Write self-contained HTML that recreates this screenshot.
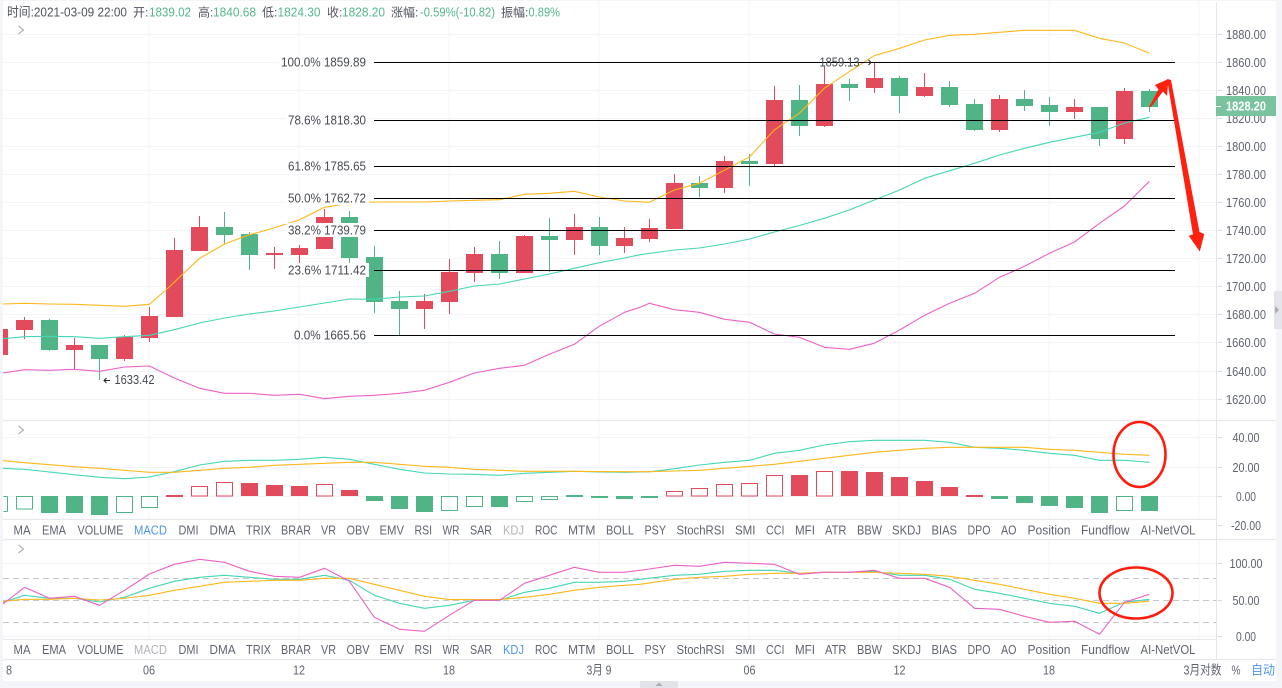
<!DOCTYPE html>
<html><head><meta charset="utf-8"><style>
html,body{margin:0;padding:0;background:#f3f5f9;width:1282px;height:688px;overflow:hidden}
svg{display:block}
text{font-family:"Liberation Sans","Noto Sans CJK SC",sans-serif;font-size:13px;fill:#50535f}
text.c{font-size:12px}
.g{fill:#55b78b}.t{fill:#5f6470}.m{fill:#5f6470}.k{fill:#474a52}
polyline{fill:none;stroke-width:1.1;stroke-linejoin:round}
</style></head><body>
<svg width="1282" height="688" viewBox="0 0 1282 688" xmlns="http://www.w3.org/2000/svg">
<rect x="0" y="0" width="1282" height="688" fill="#f3f5f9"/>
<rect x="3" y="1" width="1273" height="680" fill="#fff"/>
<!-- grid -->
<path d="M3 34.5H1217M3 62.5H1217M3 90.5H1217M3 118.5H1217M3 146.5H1217M3 174.5H1217M3 202.5H1217M3 230.5H1217M3 258.5H1217M3 286.5H1217M3 314.5H1217M3 342.5H1217M3 371.5H1217M3 399.5H1217M3 437.5H1217M3 467.5H1217M3 496.5H1217M3 563.5H1217M3 636.5H1217M149 1V660M299 1V660M449 1V660M599 1V660M749 1V660M899 1V660M1049 1V660M1199 1V660" stroke="#f1f4f8" stroke-width="1" fill="none"/>
<path d="M3 578.5H1217M3 600.5H1217M3 622.5H1217" stroke="#c6c6c6" stroke-width="1" stroke-dasharray="6 4" fill="none"/>
<!-- panels -->
<path d="M3 420.5H1276M3 519.5H1217M3 539.5H1276M3 639.5H1217M3 659.5H1276" stroke="#e6e8ec" stroke-width="1.2" fill="none"/>
<rect x="3" y="520" width="1213" height="19" fill="#fff"/>
<rect x="3" y="640" width="1213" height="19" fill="#fff"/>
<path d="M1216.5 2V660" stroke="#e3e6eb" stroke-width="1" fill="none"/>
<path d="M1217 34.5h5M1217 62.5h5M1217 90.5h5M1217 118.5h5M1217 146.5h5M1217 174.5h5M1217 202.5h5M1217 230.5h5M1217 258.5h5M1217 286.5h5M1217 314.5h5M1217 342.5h5M1217 371.5h5M1217 399.5h5M1217 437.5h5M1217 467.5h5M1217 496.5h5M1217 525.5h5M1217 563.5h5M1217 600.5h5M1217 636.5h5" stroke="#d8dce3" stroke-width="1" fill="none"/>
<!-- red candle wicks and bodies -->
<path d="M24.5 317V339M74.5 338V369M124.5 335V361M149.5 307V342M174.5 238V317M199.5 216V251M274.5 247V269M299.5 245V263M324.5 209V249M424.5 294V329M449.5 259V314M474.5 247V282M524.5 235V273M574.5 214V255M624.5 227V253M649.5 219V242M674.5 174V229M724.5 156V193M774.5 86V166M824.5 66V127M874.5 62V93M924.5 73V97M999.5 95V132M1074.5 99V119M1124.5 88V144" stroke="#e24b5b" stroke-width="1" fill="none"/>
<path d="M3 329h5v26h-5zM16 320h17v10h-17zM66 345h17v5h-17zM116 337h17v22h-17zM141 316h17v22h-17zM166 250h17v67h-17zM191 227h17v24h-17zM266 253h17v2h-17zM291 248h17v7h-17zM316 217h17v32h-17zM416 301h17v8h-17zM441 272h17v30h-17zM466 254h17v19h-17zM516 236h17v37h-17zM566 227h17v13h-17zM616 238h17v8h-17zM641 228h17v11h-17zM666 183h17v46h-17zM716 161h17v27h-17zM766 100h17v64h-17zM816 84h17v42h-17zM866 78h17v10h-17zM916 87h17v9h-17zM991 99h17v31h-17zM1066 107h17v5h-17zM1116 91h17v48h-17z" fill="#e24b5b"/>
<!-- green candles -->
<path d="M49.5 319V351M99.5 345V380M224.5 212V244M249.5 232V270M349.5 211V263M374.5 246V313M399.5 291V335M499.5 241V279M549.5 218V272M599.5 217V255M699.5 176V197M749.5 154V186M799.5 85V136M849.5 79V101M899.5 76V113M949.5 81V107M974.5 99V131M1024.5 90V111M1049.5 97V126M1099.5 107V146M1149.5 89V112" stroke="#50b487" stroke-width="1" fill="none"/>
<path d="M41 320h17v30h-17zM91 345h17v14h-17zM216 227h17v8h-17zM241 234h17v21h-17zM341 217h17v41h-17zM366 257h17v45h-17zM391 301h17v8h-17zM491 254h17v19h-17zM541 236h17v4h-17zM591 227h17v19h-17zM691 183h17v5h-17zM741 161h17v3h-17zM791 100h17v26h-17zM841 84h17v4h-17zM891 78h17v18h-17zM941 87h17v18h-17zM966 104h17v26h-17zM1016 99h17v7h-17zM1041 105h17v7h-17zM1091 107h17v32h-17zM1141 91h17v16h-17z" fill="#50b487"/>
<!-- MACD histogram -->
<path d="M66 496h17v17h-17zM91 496h17v19h-17zM41 496h17v17h-17zM366 496h17v5h-17zM391 496h17v13h-17zM416 496h17v16h-17zM491 496h17v11h-17zM566 495h17v2h-17zM591 496h17v2h-17zM616 496h17v3h-17zM641 496h17v2h-17zM1016 496h17v7h-17zM991 496h17v3h-17zM1041 496h17v10h-17zM1066 496h17v12h-17zM1091 496h17v17h-17zM1141 496h17v15h-17z" fill="#50b487"/>
<path d="M3.5 496.5H7.5M3.5 511.5H7.5M7.5 496.5V511.5M16.5 496.5h16v12.5h-16zM116.5 496.5h16v16h-16zM141.5 496.5h16v11h-16zM441.5 496.5h16v14h-16zM466.5 496.5h16v10h-16zM516.5 496.5h16v5h-16zM541.5 496.5h16v3h-16zM1116.5 496.5h16v14h-16z" fill="none" stroke="#50b487" stroke-width="1"/>
<path d="M166 495h17v2h-17zM241 483h17v13h-17zM266 485h17v11h-17zM291 486h17v10h-17zM341 490h17v6h-17zM791 475h17v21h-17zM841 471h17v25h-17zM866 472h17v24h-17zM891 477h17v19h-17zM916 481h17v15h-17zM941 487h17v9h-17zM966 495h17v2h-17z" fill="#e24b5b"/>
<path d="M191.5 486.5h16v9.5h-16zM216.5 482.5h16v13.5h-16zM316.5 484.5h16v11.5h-16zM666.5 491.5h16v4.5h-16zM691.5 488.5h16v7.5h-16zM716.5 484.5h16v11.5h-16zM741.5 483.5h16v12.5h-16zM766.5 475.5h16v20.5h-16zM816.5 471.5h16v24.5h-16z" fill="none" stroke="#e24b5b" stroke-width="1"/>
<!-- main lines -->
<polyline stroke="#ffb71b" points="3,304 24.5,303.3 49.5,304 74.3,304.3 99.6,305.3 124.5,306.3 149.4,304.3 166,290 199.6,258.3 224.5,244 249.4,234.7 267,230 299,220 324.5,207.3 349.4,203.3 374.3,202 399.6,202 424.5,202 449.4,201 474.3,200.3 499.6,199.7 524.5,194.3 549.4,193.3 574.3,191.3 599.2,197 624.5,201 649.4,202.3 674.4,190 699.4,183.3 724.8,170 749.7,156.7 774.3,130 799.3,113.3 824.3,88.3 849.3,71.7 874.2,55.7 899.6,48.3 924.6,40 949.6,35.3 974.6,34.3 999.5,32.3 1024.5,30.3 1049.5,30.3 1074.5,30.3 1099.5,38.3 1124.5,43 1149.4,53.3"/>
<polyline stroke="#45d6b5" points="3,338.7 24.5,336.7 49.5,336.3 74.3,336.7 99.6,338.3 124.5,336.7 149.4,335.3 174.3,329.7 199.6,323 224.5,318 249.4,314 274.3,311 299.6,307 324.5,303 349.4,299 374.3,299.3 399.6,297 424.5,296 449.4,291.3 474.3,286 499.6,284 524.5,279 549.4,274 574.3,268.3 599.2,262.7 624.5,258 640,254.7 674.4,250 699.4,248 724.8,244 749.7,239 774.3,232 799.3,225.5 824.3,218.3 849.3,210 874.2,200 899.6,190 924.6,178.3 949.6,170.7 974.6,163.3 999.5,155 1024.5,148.3 1049.5,142.3 1074.5,137.3 1099.5,132.3 1124.5,123 1149.4,117.3"/>
<polyline stroke="#ec62c6" points="3,373 24.5,369.7 49.5,370.3 74.3,369.3 99.6,371.3 124.5,367 149.4,366 174.3,378 199.6,388.3 224.5,393.3 249.4,393.3 274.3,395.3 299.6,394.3 324.5,398.7 349.4,396.3 374.3,395.3 399.6,393.3 424.5,390.3 449.4,382.3 474.3,373 499.6,368.3 524.5,365.3 549.4,354.3 574.3,344.3 599.2,326.3 624.5,312.3 640,307.3 649.4,303.3 674.4,309.7 699.4,312.3 724.8,319.3 749.7,322.3 774.3,334 799.3,337.3 824.3,347.3 849.3,349.3 874.2,343.3 899.6,330 924.6,315.3 949.6,303.3 974.6,293.3 999.5,277.3 1024.5,266.3 1049.5,253.3 1074.5,242 1099.5,223.3 1124.5,206 1149.4,181.3"/>
<!-- MACD lines -->
<polyline stroke="#45d6b5" points="3,468.3 24.5,469.3 49.5,472 74.3,474.7 99.6,477.3 124.5,478.7 149.4,477 174.3,471.7 199.6,465 224.5,461.3 249.4,460.3 274.3,460.3 299.6,459.3 324.5,457.3 349.4,459.3 374.3,464.3 399.6,469.3 424.5,473 449.4,474 474.3,474.3 499.6,475.3 524.5,473.3 549.4,472.3 574.3,471.3 599.2,472 624.5,472.3 649.4,471.8 674.4,468.7 699.4,465 724.8,462.3 749.7,460.3 774.3,453.3 799.3,450.3 824.3,445 849.3,441.7 874.2,440.3 899.6,440.3 924.6,440.3 949.6,442.3 974.6,447.3 999.5,448.3 1024.5,450.3 1049.5,453.3 1074.5,455.3 1099.5,460.3 1124.5,460.3 1149.4,462.3"/>
<polyline stroke="#ffb71b" points="3,460.7 24.5,462.7 49.5,464.7 74.3,466.7 99.6,468.3 124.5,470.3 149.4,472.3 174.3,472.3 199.6,470.3 224.5,468.3 249.4,467.3 274.3,465.3 299.6,464.3 324.5,463.3 349.4,462.3 374.3,462.3 399.6,464.3 424.5,466.3 449.4,467.3 474.3,469.3 499.6,470.3 524.5,471.3 549.4,471.3 574.3,471.3 599.2,471.6 624.5,471.7 649.4,471.7 674.4,471 699.4,470.3 724.8,468.3 749.7,466.3 774.3,464.3 799.3,461.3 824.3,458.3 849.3,455.3 874.2,452.3 899.6,450.3 924.6,448.3 949.6,447.3 974.6,447.3 999.5,447.3 1024.5,447.3 1049.5,449.3 1074.5,450.3 1099.5,452.3 1124.5,454.3 1149.4,455.3"/>
<!-- KDJ lines -->
<polyline stroke="#45d6b5" points="3,602.3 24.5,595.3 49.5,598.3 74.3,598.3 99.6,602 124.5,597.3 149.4,588.3 174.3,581.3 199.6,577.3 224.5,575.3 249.4,577.3 274.3,579.3 299.6,579.3 324.5,575.3 349.4,580.3 374.3,595.3 399.6,603.3 424.5,608.3 449.4,605.3 474.3,600.3 499.6,600.3 524.5,592.3 549.4,588.3 574.3,582.3 599.2,582.3 624.5,581.3 640,579.3 674.4,575.3 699.4,574.3 724.8,571.3 749.7,570.3 774.3,570.3 799.3,573.3 824.3,572.3 849.3,572.3 874.2,571.3 899.6,575.3 924.6,575.3 949.6,579.3 974.6,589.3 999.5,593.3 1024.5,598.3 1049.5,603.3 1074.5,606.3 1099.5,613.3 1124.5,602.3 1149.4,599.3"/>
<polyline stroke="#ffb71b" points="3,601.3 24.5,599.3 49.5,599.3 74.3,598.3 99.6,600 124.5,598.3 149.4,595.3 174.3,590.3 199.6,586.3 224.5,582.3 249.4,581.3 274.3,580.3 299.6,580.3 324.5,578.3 349.4,578.3 374.3,584.3 399.6,590.3 424.5,596.3 449.4,599.6 474.3,599.6 499.6,599.6 524.5,597.3 549.4,594.3 574.3,590.3 599.2,587.3 624.5,585.3 640,584.3 674.4,579.3 699.4,577.3 724.8,576.3 749.7,574.3 774.3,573.3 799.3,573.3 824.3,572.3 849.3,572.3 874.2,572.3 899.6,573.3 924.6,574.3 949.6,576.3 974.6,580.3 999.5,584.3 1024.5,589.3 1049.5,594.3 1074.5,598.3 1099.5,603.3 1124.5,603.3 1149.4,601.3"/>
<polyline stroke="#ec62c6" points="3,604 24.5,587.3 49.5,598.3 74.3,596.3 99.6,605.3 124.5,590.3 149.4,574 174.3,564.3 199.6,559.3 224.5,562.3 249.4,571.3 274.3,576.3 299.6,577.3 324.5,568.3 349.4,581.3 374.3,617.3 399.6,629.3 424.5,631.3 449.4,615.3 474.3,600.3 499.6,600.3 524.5,583.3 549.4,575.3 574.3,567.3 599.2,572.3 624.5,572.3 640,570.3 649.4,569 674.4,565.3 699.4,566.3 724.8,562.3 749.7,563.3 774.3,564.3 799.3,574.3 824.3,572.3 849.3,572.3 874.2,570.3 899.6,578.3 924.6,578.3 949.6,587.3 974.6,608.3 999.5,609.3 1024.5,616.3 1049.5,622.3 1074.5,621.3 1099.5,634.3 1124.5,602.3 1149.4,594.3"/>
<!-- fib label backgrounds -->
<g fill="#fff">
<rect x="279" y="55" width="90" height="14"/><rect x="286" y="113" width="83" height="14"/><rect x="286" y="159" width="83" height="14"/><rect x="286" y="191" width="83" height="14"/><rect x="286" y="223" width="83" height="14"/><rect x="286" y="263" width="83" height="14"/><rect x="292" y="328" width="77" height="14"/>
</g>
<!-- fib lines -->
<path d="M374 62.5H1175M374 120.5H1175M374 166.5H1175M374 198.5H1175M374 230.5H1175M374 270.5H1175M374 335.5H1175" stroke="#000" stroke-width="1" fill="none"/>
<g class="k">
<text class="k" x="281" y="66.5" textLength="85" lengthAdjust="spacingAndGlyphs">100.0% 1859.89</text>
<text class="k" x="288" y="124.5" textLength="78" lengthAdjust="spacingAndGlyphs">78.6% 1818.30</text>
<text class="k" x="288" y="170.5" textLength="78" lengthAdjust="spacingAndGlyphs">61.8% 1785.65</text>
<text class="k" x="288" y="202.5" textLength="78" lengthAdjust="spacingAndGlyphs">50.0% 1762.72</text>
<text class="k" x="288" y="234.5" textLength="78" lengthAdjust="spacingAndGlyphs">38.2% 1739.79</text>
<text class="k" x="288" y="274.5" textLength="78" lengthAdjust="spacingAndGlyphs">23.6% 1711.42</text>
<text class="k" x="294" y="339.5" textLength="72" lengthAdjust="spacingAndGlyphs">0.0% 1665.56</text>
</g>
<text class="k" x="819.5" y="66.5" textLength="40" lengthAdjust="spacingAndGlyphs">1859.13</text>
<path d="M865 62.5h6M868.5 60l2.5 2.5l-2.5 2.5" stroke="#222" stroke-width="1" fill="none"/>
<text class="k" x="114.5" y="384" textLength="40" lengthAdjust="spacingAndGlyphs">1633.42</text>
<path d="M104 380.5h6M106.5 378l-2.5 2.5l2.5 2.5" stroke="#222" stroke-width="1" fill="none"/>
<!-- red annotations -->
<polygon points="1167,79 1171,80 1199.5,232 1204.3,234 1199.8,251.5 1188.7,235.7 1193,234.5" fill="#ff2010"/>
<polygon points="1149,107 1158.5,89.5 1155,85 1168.5,79 1167,96 1163,91.5 1151,107" fill="#ff2010"/>
<ellipse cx="1139.5" cy="454.5" rx="26" ry="32.5" fill="none" stroke="#ff1c0c" stroke-width="2.6"/>
<ellipse cx="1136" cy="593" rx="36.5" ry="25.5" fill="none" stroke="#ff1c0c" stroke-width="2.6"/>
<!-- header -->
<text x="7" y="16.5" textLength="120" lengthAdjust="spacingAndGlyphs">时间:2021-03-09 22:00</text>
<text class="c" x="133" y="16.5">开:</text><text class="g" x="149" y="16.5" textLength="42" lengthAdjust="spacingAndGlyphs">1839.02</text>
<text class="c" x="198" y="16.5">高:</text><text class="g" x="213" y="16.5" textLength="43" lengthAdjust="spacingAndGlyphs">1840.68</text>
<text class="c" x="262" y="16.5">低:</text><text class="g" x="277.5" y="16.5" textLength="43" lengthAdjust="spacingAndGlyphs">1824.30</text>
<text class="c" x="327" y="16.5">收:</text><text class="g" x="342" y="16.5" textLength="43" lengthAdjust="spacingAndGlyphs">1828.20</text>
<text class="c" x="391" y="16.5">涨幅:</text><text class="g" x="420" y="16.5" textLength="75" lengthAdjust="spacingAndGlyphs">-0.59%(-10.82)</text>
<text class="c" x="501" y="16.5">振幅:</text><text class="g" x="528.5" y="16.5" textLength="31.5" lengthAdjust="spacingAndGlyphs">0.89%</text>
<!-- chevrons -->
<path d="M18.5 26l5 4l-5 4M18.5 426l5 4l-5 4M18.5 545l5 4l-5 4" fill="none" stroke="#a0a3ab" stroke-width="1"/>
<!-- price axis -->
<g class="t">
<text class="t" x="1226" y="39" textLength="40" lengthAdjust="spacingAndGlyphs">1880.00</text>
<text class="t" x="1226" y="67" textLength="40" lengthAdjust="spacingAndGlyphs">1860.00</text>
<text class="t" x="1226" y="95" textLength="40" lengthAdjust="spacingAndGlyphs">1840.00</text>
<text class="t" x="1226" y="123" textLength="40" lengthAdjust="spacingAndGlyphs">1820.00</text>
<text class="t" x="1226" y="151" textLength="40" lengthAdjust="spacingAndGlyphs">1800.00</text>
<text class="t" x="1226" y="179" textLength="40" lengthAdjust="spacingAndGlyphs">1780.00</text>
<text class="t" x="1226" y="207" textLength="40" lengthAdjust="spacingAndGlyphs">1760.00</text>
<text class="t" x="1226" y="235" textLength="40" lengthAdjust="spacingAndGlyphs">1740.00</text>
<text class="t" x="1226" y="263" textLength="40" lengthAdjust="spacingAndGlyphs">1720.00</text>
<text class="t" x="1226" y="291" textLength="40" lengthAdjust="spacingAndGlyphs">1700.00</text>
<text class="t" x="1226" y="319" textLength="40" lengthAdjust="spacingAndGlyphs">1680.00</text>
<text class="t" x="1226" y="347" textLength="40" lengthAdjust="spacingAndGlyphs">1660.00</text>
<text class="t" x="1226" y="376" textLength="40" lengthAdjust="spacingAndGlyphs">1640.00</text>
<text class="t" x="1226" y="404" textLength="40" lengthAdjust="spacingAndGlyphs">1620.00</text>
<text class="t" x="1232.5" y="442" textLength="27" lengthAdjust="spacingAndGlyphs">40.00</text>
<text class="t" x="1232.5" y="472" textLength="27" lengthAdjust="spacingAndGlyphs">20.00</text>
<text class="t" x="1236" y="501" textLength="20" lengthAdjust="spacingAndGlyphs">0.00</text>
<text class="t" x="1231" y="530" textLength="30" lengthAdjust="spacingAndGlyphs">-20.00</text>
<text class="t" x="1229.5" y="568" textLength="33" lengthAdjust="spacingAndGlyphs">100.00</text>
<text class="t" x="1232.5" y="605" textLength="27" lengthAdjust="spacingAndGlyphs">50.00</text>
<text class="t" x="1236" y="641" textLength="20" lengthAdjust="spacingAndGlyphs">0.00</text>
</g>
<rect x="1216" y="96" width="60" height="20" fill="#7ac39f"/>
<path d="M1216 106.5h5" stroke="#fff" stroke-width="1"/>
<text x="1226" y="110.5" textLength="40" lengthAdjust="spacingAndGlyphs" style="fill:#fff;font-weight:bold">1828.20</text>
<!-- menu 1 -->
<g class="m">
<text class="m" x="13.5" y="534.5" textLength="17" lengthAdjust="spacingAndGlyphs">MA</text>
<text class="m" x="42" y="534.5" textLength="24" lengthAdjust="spacingAndGlyphs">EMA</text>
<text class="m" x="77.5" y="534.5" textLength="46" lengthAdjust="spacingAndGlyphs">VOLUME</text>
<text style="fill:#4f95ee" x="134" y="534.5" textLength="33" lengthAdjust="spacingAndGlyphs">MACD</text>
<text class="m" x="178.5" y="534.5" textLength="20" lengthAdjust="spacingAndGlyphs">DMI</text>
<text class="m" x="209.5" y="534.5" textLength="26" lengthAdjust="spacingAndGlyphs">DMA</text>
<text class="m" x="246" y="534.5" textLength="25" lengthAdjust="spacingAndGlyphs">TRIX</text>
<text class="m" x="281" y="534.5" textLength="30" lengthAdjust="spacingAndGlyphs">BRAR</text>
<text class="m" x="321" y="534.5" textLength="15" lengthAdjust="spacingAndGlyphs">VR</text>
<text class="m" x="346.5" y="534.5" textLength="23" lengthAdjust="spacingAndGlyphs">OBV</text>
<text class="m" x="379.5" y="534.5" textLength="24.5" lengthAdjust="spacingAndGlyphs">EMV</text>
<text class="m" x="414.5" y="534.5" textLength="17.5" lengthAdjust="spacingAndGlyphs">RSI</text>
<text class="m" x="442.5" y="534.5" textLength="17" lengthAdjust="spacingAndGlyphs">WR</text>
<text class="m" x="470" y="534.5" textLength="22" lengthAdjust="spacingAndGlyphs">SAR</text>
<text style="fill:#b0b2b8" x="503" y="534.5" textLength="21" lengthAdjust="spacingAndGlyphs">KDJ</text>
<text class="m" x="535" y="534.5" textLength="22.5" lengthAdjust="spacingAndGlyphs">ROC</text>
<text class="m" x="568" y="534.5" textLength="27.5" lengthAdjust="spacingAndGlyphs">MTM</text>
<text class="m" x="606" y="534.5" textLength="28" lengthAdjust="spacingAndGlyphs">BOLL</text>
<text class="m" x="644.5" y="534.5" textLength="21.5" lengthAdjust="spacingAndGlyphs">PSY</text>
<text class="m" x="676.5" y="534.5" textLength="48" lengthAdjust="spacingAndGlyphs">StochRSI</text>
<text class="m" x="735" y="534.5" textLength="20.5" lengthAdjust="spacingAndGlyphs">SMI</text>
<text class="m" x="766" y="534.5" textLength="18.5" lengthAdjust="spacingAndGlyphs">CCI</text>
<text class="m" x="795" y="534.5" textLength="20" lengthAdjust="spacingAndGlyphs">MFI</text>
<text class="m" x="825" y="534.5" textLength="21.5" lengthAdjust="spacingAndGlyphs">ATR</text>
<text class="m" x="857" y="534.5" textLength="25" lengthAdjust="spacingAndGlyphs">BBW</text>
<text class="m" x="892" y="534.5" textLength="29" lengthAdjust="spacingAndGlyphs">SKDJ</text>
<text class="m" x="931.5" y="534.5" textLength="25.5" lengthAdjust="spacingAndGlyphs">BIAS</text>
<text class="m" x="967.5" y="534.5" textLength="23" lengthAdjust="spacingAndGlyphs">DPO</text>
<text class="m" x="1001" y="534.5" textLength="15.5" lengthAdjust="spacingAndGlyphs">AO</text>
<text class="m" x="1027.5" y="534.5" textLength="43" lengthAdjust="spacingAndGlyphs">Position</text>
<text class="m" x="1081" y="534.5" textLength="48.5" lengthAdjust="spacingAndGlyphs">Fundflow</text>
<text class="m" x="1140.5" y="534.5" textLength="55" lengthAdjust="spacingAndGlyphs">AI-NetVOL</text>
</g>
<!-- menu 2 -->
<g class="m">
<text class="m" x="13.5" y="654" textLength="17" lengthAdjust="spacingAndGlyphs">MA</text>
<text class="m" x="42" y="654" textLength="24" lengthAdjust="spacingAndGlyphs">EMA</text>
<text class="m" x="77.5" y="654" textLength="46" lengthAdjust="spacingAndGlyphs">VOLUME</text>
<text style="fill:#b0b2b8" x="134" y="654" textLength="33" lengthAdjust="spacingAndGlyphs">MACD</text>
<text class="m" x="178.5" y="654" textLength="20" lengthAdjust="spacingAndGlyphs">DMI</text>
<text class="m" x="209.5" y="654" textLength="26" lengthAdjust="spacingAndGlyphs">DMA</text>
<text class="m" x="246" y="654" textLength="25" lengthAdjust="spacingAndGlyphs">TRIX</text>
<text class="m" x="281" y="654" textLength="30" lengthAdjust="spacingAndGlyphs">BRAR</text>
<text class="m" x="321" y="654" textLength="15" lengthAdjust="spacingAndGlyphs">VR</text>
<text class="m" x="346.5" y="654" textLength="23" lengthAdjust="spacingAndGlyphs">OBV</text>
<text class="m" x="379.5" y="654" textLength="24.5" lengthAdjust="spacingAndGlyphs">EMV</text>
<text class="m" x="414.5" y="654" textLength="17.5" lengthAdjust="spacingAndGlyphs">RSI</text>
<text class="m" x="442.5" y="654" textLength="17" lengthAdjust="spacingAndGlyphs">WR</text>
<text class="m" x="470" y="654" textLength="22" lengthAdjust="spacingAndGlyphs">SAR</text>
<text style="fill:#4f95ee" x="503" y="654" textLength="21" lengthAdjust="spacingAndGlyphs">KDJ</text>
<text class="m" x="535" y="654" textLength="22.5" lengthAdjust="spacingAndGlyphs">ROC</text>
<text class="m" x="568" y="654" textLength="27.5" lengthAdjust="spacingAndGlyphs">MTM</text>
<text class="m" x="606" y="654" textLength="28" lengthAdjust="spacingAndGlyphs">BOLL</text>
<text class="m" x="644.5" y="654" textLength="21.5" lengthAdjust="spacingAndGlyphs">PSY</text>
<text class="m" x="676.5" y="654" textLength="48" lengthAdjust="spacingAndGlyphs">StochRSI</text>
<text class="m" x="735" y="654" textLength="20.5" lengthAdjust="spacingAndGlyphs">SMI</text>
<text class="m" x="766" y="654" textLength="18.5" lengthAdjust="spacingAndGlyphs">CCI</text>
<text class="m" x="795" y="654" textLength="20" lengthAdjust="spacingAndGlyphs">MFI</text>
<text class="m" x="825" y="654" textLength="21.5" lengthAdjust="spacingAndGlyphs">ATR</text>
<text class="m" x="857" y="654" textLength="25" lengthAdjust="spacingAndGlyphs">BBW</text>
<text class="m" x="892" y="654" textLength="29" lengthAdjust="spacingAndGlyphs">SKDJ</text>
<text class="m" x="931.5" y="654" textLength="25.5" lengthAdjust="spacingAndGlyphs">BIAS</text>
<text class="m" x="967.5" y="654" textLength="23" lengthAdjust="spacingAndGlyphs">DPO</text>
<text class="m" x="1001" y="654" textLength="15.5" lengthAdjust="spacingAndGlyphs">AO</text>
<text class="m" x="1027.5" y="654" textLength="43" lengthAdjust="spacingAndGlyphs">Position</text>
<text class="m" x="1081" y="654" textLength="48.5" lengthAdjust="spacingAndGlyphs">Fundflow</text>
<text class="m" x="1140.5" y="654" textLength="55" lengthAdjust="spacingAndGlyphs">AI-NetVOL</text>
</g>
<!-- time axis -->
<text class="t" x="6" y="674.5" textLength="6" lengthAdjust="spacingAndGlyphs">8</text>
<text class="t" x="143" y="674.5" textLength="12" lengthAdjust="spacingAndGlyphs">06</text>
<text class="t" x="293" y="674.5" textLength="12" lengthAdjust="spacingAndGlyphs">12</text>
<text class="t" x="443" y="674.5" textLength="12" lengthAdjust="spacingAndGlyphs">18</text>
<text class="t" x="586.5" y="674.5" textLength="25" lengthAdjust="spacingAndGlyphs">3月 9</text>
<text class="t" x="743.5" y="674.5" textLength="12" lengthAdjust="spacingAndGlyphs">06</text>
<text class="t" x="893.5" y="674.5" textLength="12" lengthAdjust="spacingAndGlyphs">12</text>
<text class="t" x="1043" y="674.5" textLength="12" lengthAdjust="spacingAndGlyphs">18</text>
<text class="t" x="1183.5" y="674.5" textLength="38" lengthAdjust="spacingAndGlyphs">3月对数</text>
<text class="t" x="1231.5" y="674.5" textLength="9" lengthAdjust="spacingAndGlyphs">%</text>
<text style="fill:#4f95ee" x="1251" y="674.5" textLength="24" lengthAdjust="spacingAndGlyphs">自动</text>
<!-- handles -->
<rect x="640" y="681" width="38" height="7" fill="#e1e3e8"/>
<path d="M655.5 686l3.5-3.5l3.5 3.5z" fill="#a9acb3"/>
<rect x="1274" y="291" width="8" height="38" fill="#e3e5ea"/>
<path d="M1275 306l4 4l-4 4z" fill="#a9acb3"/>
</svg>
</body></html>
